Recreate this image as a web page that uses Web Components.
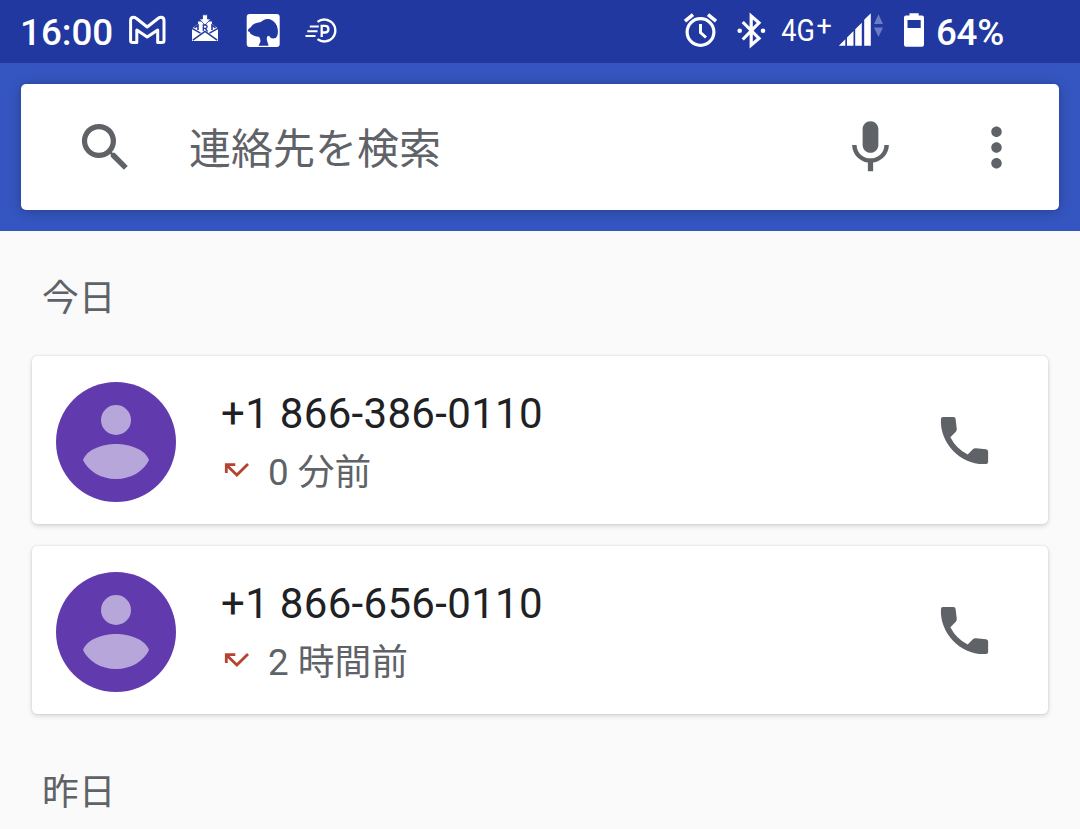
<!DOCTYPE html>
<html lang="ja">
<head>
<meta charset="utf-8">
<title>通話履歴</title>
<style>
    body {
        margin: 0;
        width: 1080px;
        height: 829px;
        overflow: hidden;
        background: #fafafa;
        color: #5f6368;
        font-family: Roboto, "Noto Sans CJK JP", sans-serif;
    }
</style>
</head>
<body>
<call-log-app></call-log-app>

<script>
// each icon: [viewBox, markup]
const ICONS = {
    gmail: ['130 0 36 63', `
        <path d="M133.5 17.2Q130.6 17.2 130.6 20.5V40.5Q130.6 42.6 132.600 42.600H136.800V30L147.200 37L157.700 30V42.600H162Q164 42.600 164 40.500V20.500Q164 17.200 161 17.200Q159.700 17.200 158.300 18.300L147.200 27L136.200 18.300Q134.900 17.200 133.500 17.200Z"
            fill="none" stroke="#fff" stroke-width="3" stroke-linejoin="round"/>`],
    mail: ['190 0 32 63', `
        <path d="M192 28.500L198 24V21.500H212V24L218 28.500V41H192Z" fill="#fff"/>
        <path d="M202.500 14.800H207.500V19H210.800L205 25L199.200 19H202.500Z" fill="#fff" stroke="#2138a0" stroke-width=".8"/>
        <path d="M194.500 27.800L198 25.200V30M215.500 27.800L212 25.200V30" fill="none" stroke="#2138a0" stroke-width="1.600"/>
        <path d="M192 28.400L200.500 33.200M218 28.400L209.500 33.200M192.800 40.200L205 31.500L217.200 40.200" fill="none" stroke="#2138a0" stroke-width="1.500"/>
        <path d="M203.300 31V25H205.300Q207.100 25 207.100 26.700Q207.100 28.400 205.300 28.400H203.300M205.300 28.400L207.500 31.500" fill="none" stroke="#2138a0" stroke-width="1.300"/>`],
    dog: ['246 0 36 63', `
        <rect x="246.7" y="14" width="33" height="33" rx="3" fill="#fff"/>
        <path d="M247.8 30.5Q248.3 28.5 250.500 27.500Q252.5 23.5 257.5 22.7Q261.5 22.3 263 20.5Q266 18.5 270 19.2Q277 22 277.8 29.5Q278.5 37.5 274.5 38.3Q270.5 39 269 35.7L267.2 36.5Q266.5 38.3 267 40.5L268.6 45.8H258.5L260.5 41.5Q260.5 38.3 259 36.8Q255 36.5 252.5 35Q250 34 249.5 31.8Q248 31.8 247.8 30.5Z" fill="#2138a0"/>`],
    parking: ['306 0 32 63', `
        <path d="M317.5 21.9A11 11 0 1 1 317.5 39.1" fill="none" stroke="#fff" stroke-width="2.3"/>
        <path d="M309.8 26.4H318.8M307.3 31.2H317.5M305.5 36H315.5" stroke="#fff" stroke-width="2"/>
        <path d="M321.7 37V25.9H325Q328.4 25.9 328.4 29.2Q328.4 32.5 325 32.5H322" fill="none" stroke="#fff" stroke-width="2.3"/>`],
    alarm: ['684 0 50 63', `
        <circle cx="700.5" cy="32" r="13.4" fill="none" stroke="#fff" stroke-width="3.2"/>
        <path d="M700.5 24V32.5L706 37.5" fill="none" stroke="#fff" stroke-width="2.9"/>
        <path d="M685 21.2L693 14.7M716 21.2L708 14.7" stroke="#fff" stroke-width="3.6"/>`],
    bluetooth: ['734 0 46 63', `
        <path d="M742.7 22L759 38.5L751.2 45V16L759 22.8L742.7 39.5" fill="none" stroke="#fff" stroke-width="3.2"/>
        <circle cx="739.7" cy="30.7" r="2.3" fill="#fff"/>
        <circle cx="763" cy="30.7" r="2.3" fill="#fff"/>`],
    network: ['780 0 58 63', `
        <text transform="translate(781.2 40.8) scale(.845 1)" font-size="32" fill="#fff">4G</text>
        <text x="816.5" y="34.700" font-size="27" fill="#fff">+</text>`],
    signal: ['838 0 62 63', `
        <path d="M838.8 45.7L845.3 39.2V45.7ZM847 45.7V37.5L853.5 31V45.7ZM855.2 45.7V29.3L861.8 22.7V45.7ZM864.2 45.7V19.7L870.8 13.3V45.7Z" fill="#fff"/>
        <path d="M874 24L878.5 14.3L883 24ZM874 27.5H883L878.5 37Z" fill="#6b7cc4"/>`],
    battery: ['900 0 36 63', `
        <path d="M909.5 13.2H918.7V15.5H922Q924 15.5 924 17.5V44.8Q924 46.8 922 46.8H906Q904 46.8 904 44.8V17.5Q904 15.5 906 15.5H909.5ZM907.5 20V28H920.7V20Z" fill="#fff" fill-rule="evenodd"/>`],
    search: ['0 0 24 24', `<path d="M15.5 14h-.79l-.28-.27A6.47 6.47 0 0 0 16 9.5 6.5 6.5 0 1 0 9.5 16c1.61 0 3.09-.59 4.23-1.57l.27.28v.79l5 4.99L20.49 19l-4.99-5zm-6 0C7.01 14 5 11.99 5 9.5S7.01 5 9.5 5 14 7.01 14 9.5 11.99 14 9.5 14z"/>`],
    mic: ['0 0 24 24', `<path d="M12 14c1.66 0 2.99-1.34 2.99-3L15 5c0-1.66-1.34-3-3-3S9 3.34 9 5v6c0 1.66 1.34 3 3 3zm5.3-3c0 3-2.54 5.1-5.3 5.1S6.7 14 6.7 11H5c0 3.41 2.72 6.23 6 6.72V21h2v-3.28c3.28-.48 6-3.3 6-6.72h-1.7z"/>`],
    more: ['0 0 24 24', `<path d="M12 8c1.1 0 2-.9 2-2s-.9-2-2-2-2 .9-2 2 .9 2 2 2zm0 2c-1.1 0-2 .9-2 2s.9 2 2 2 2-.9 2-2-.9-2-2-2zm0 6c-1.1 0-2 .9-2 2s.9 2 2 2 2-.9 2-2-.9-2-2-2z"/>`],
    phone: ['0 0 24 24', `<path d="M20.2 15.37L16.4 14.93Q15.6 14.85 15.1 15.4L13.21 17.37A15.045 15.045 0 0 1 6.62 10.78L8.6 8.8Q9.15 8.25 9.05 7.5L8.6 3.7Q8.5 3 7.8 3H3.8Q3 3 3.03 3.8C2.45 13.18 10.82 21.55 20.2 20.97Q21 20.95 21 20.2V16.2Q21 15.46 20.2 15.37Z"/>`],
    missed: ['224 462 26 16', `<path d="M226.3 473V464.6H235.3M226.5 464.9L236.9 475L248 463.9" fill="none" stroke="#b5432f" stroke-width="2.8"/>`],
    person: ['0 0 120 120', `
        <circle cx="60" cy="60" r="60" fill="#613bae"/>
        <circle cx="60" cy="38" r="15" fill="#b7a6da"/>
        <path d="M27 78C31 67 47 62 60 62S89 67 93 78C88 89 75 97 60 97S32 89 27 78Z" fill="#b7a6da"/>`],
};

class CallIcon extends HTMLElement {
    constructor() {
        super();
        this.attachShadow({ mode: 'open' });
    }

    connectedCallback() {
        const [viewBox, markup] = ICONS[this.getAttribute('name')];
        const [, , w, h] = viewBox.split(' ');
        const size = this.getAttribute('size');
        this.shadowRoot.innerHTML = `
            <style>
                :host { display: block; flex: none; }
                svg { display: block; overflow: visible; fill: currentColor; }
            </style>
            <svg viewBox="${viewBox}" width="${size || w}" height="${size || h}" aria-hidden="true">${markup}</svg>`;
    }
}

class StatusBar extends HTMLElement {
    constructor() {
        super();
        this.attachShadow({ mode: 'open' });
        this.shadowRoot.innerHTML = `
            <style>
                :host {
                    display: flex;
                    justify-content: space-between;
                    height: 63px;
                    padding: 0 77px 0 20px;
                    background: #2138a0;
                    color: #fff;
                    font-size: 36.75px;
                    font-weight: 500;
                    line-height: 65px;
                }
                .left, .right { display: flex; }
                .left { gap: 24px; }
                .time { width: 86px; white-space: nowrap; }
                .level { width: 67px; white-space: nowrap; letter-spacing: -.3px; }
            </style>
            <div class="left">
                <span class="time">16:00</span>
                <call-icon name="gmail"></call-icon>
                <call-icon name="mail"></call-icon>
                <call-icon name="dog"></call-icon>
                <call-icon name="parking"></call-icon>
            </div>
            <div class="right">
                <call-icon name="alarm"></call-icon>
                <call-icon name="bluetooth"></call-icon>
                <call-icon name="network" style="font-weight: 400"></call-icon>
                <call-icon name="signal"></call-icon>
                <call-icon name="battery"></call-icon>
                <span class="level">64%</span>
            </div>`;
    }
}

class SearchBar extends HTMLElement {
    constructor() {
        super();
        this.attachShadow({ mode: 'open' });
        this.shadowRoot.innerHTML = `
            <style>
                :host {
                    display: block;
                    height: 126px;
                    padding: 21px;
                    background: #3556c0;
                }
                .box {
                    display: flex;
                    align-items: center;
                    height: 126px;
                    box-sizing: border-box;
                    padding: 0 31px 0 53px;
                    background: #fff;
                    border-radius: 5px;
                    box-shadow: 0 2px 14px rgba(0, 0, 0, .2), 0 0 4px rgba(0, 0, 0, .1);
                }
                .hint {
                    flex: 1;
                    margin-left: 52px;
                    padding-top: 5px;
                    font-size: 42px;
                    line-height: 62px;
                }
                .more { margin-left: 63px; }
            </style>
            <div class="box">
                <call-icon name="search" size="63"></call-icon>
                <span class="hint"><slot></slot></span>
                <call-icon name="mic" size="63"></call-icon>
                <call-icon class="more" name="more" size="63"></call-icon>
            </div>`;
    }
}

class CallSection extends HTMLElement {
    connectedCallback() {
        this.attachShadow({ mode: 'open' });
        this.shadowRoot.innerHTML = `
            <style>
                :host { display: block; padding: 0 32px 11px; }
                h2 {
                    margin: 0;
                    padding: 40px 10px 30px;
                    font-size: 36.75px;
                    font-weight: 400;
                    line-height: 55px;
                }
                .list { display: flex; flex-direction: column; gap: 22px; }
            </style>
            <h2>${this.getAttribute('heading')}</h2>
            <div class="list"><slot></slot></div>`;
    }
}

class CallCard extends HTMLElement {
    connectedCallback() {
        this.attachShadow({ mode: 'open' });
        this.shadowRoot.innerHTML = `
            <style>
                :host {
                    display: flex;
                    height: 168px;
                    box-sizing: border-box;
                    padding: 26px 52px 0 24px;
                    background: #fff;
                    border-radius: 5px;
                    box-shadow: 0 2px 5px rgba(0, 0, 0, .15), 0 0 2px rgba(0, 0, 0, .14);
                }
                .info { flex: 1; margin-left: 45px; padding-top: 1px; }
                .number {
                    color: #202124;
                    font-size: 42px;
                    line-height: 62px;
                    letter-spacing: .32px;
                }
                .when {
                    display: flex;
                    align-items: center;
                    gap: 18px;
                    margin-left: 3px;
                    font-size: 36.75px;
                    line-height: 55px;
                }
                .when call-icon { margin-bottom: 5px; }
                .call { margin-top: 27px; }
            </style>
            <call-icon name="person"></call-icon>
            <div class="info">
                <div class="number">${this.getAttribute('number')}</div>
                <div class="when"><call-icon name="missed"></call-icon><span><slot></slot></span></div>
            </div>
            <call-icon class="call" name="phone" size="63"></call-icon>`;
    }
}

class CallLogApp extends HTMLElement {
    constructor() {
        super();
        this.attachShadow({ mode: 'open' });
        this.shadowRoot.innerHTML = `
            <style>
                :host { display: block; }
            </style>
            <status-bar></status-bar>
            <search-bar>連絡先を検索</search-bar>
            <call-section heading="今日">
                <call-card number="+1 866-386-0110">0 分前</call-card>
                <call-card number="+1 866-656-0110">2 時間前</call-card>
            </call-section>
            <call-section heading="昨日"></call-section>`;
    }
}

customElements.define('call-icon', CallIcon);
customElements.define('status-bar', StatusBar);
customElements.define('search-bar', SearchBar);
customElements.define('call-section', CallSection);
customElements.define('call-card', CallCard);
customElements.define('call-log-app', CallLogApp);
</script>
</body>
</html>
